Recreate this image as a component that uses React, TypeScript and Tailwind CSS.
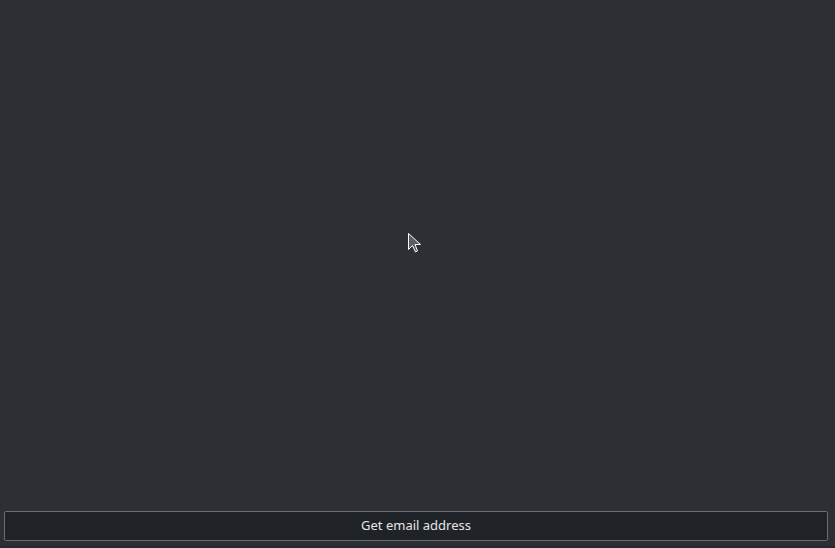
export default function App() {
  return (
    <div
      className="relative h-screen w-full bg-[#2c3034] flex flex-col overflow-hidden"
      style={{ fontFamily: "'Noto Sans', 'Open Sans', sans-serif" }}
    >
      {/* empty content area */}
      <div className="flex-1" />

      <div className="pl-[4px] pr-[7px] pb-[5px]">
        <button className="w-full h-[30px] bg-[#1f2226] border border-[#6a6e73] rounded-[2px] text-[13px] text-[#e4e5e6] flex items-center justify-center">
          Get email address
        </button>
      </div>
      <div className="h-[2px] bg-[#25292c]" />

      {/* mouse pointer */}
      <svg
        className="absolute left-[407px] top-[232px]"
        width="16"
        height="22"
        viewBox="0 0 16 22"
      >
        <path
          d="M1.5 1.5 L1.5 17.5 L5.5 13.5 L8.5 20 L10.5 19 L8 12.5 L13.5 12.5 Z"
          fill="#5b5c5e"
          stroke="#ffffff"
          strokeWidth="1"
          strokeLinejoin="miter"
        />
      </svg>
    </div>
  );
}
